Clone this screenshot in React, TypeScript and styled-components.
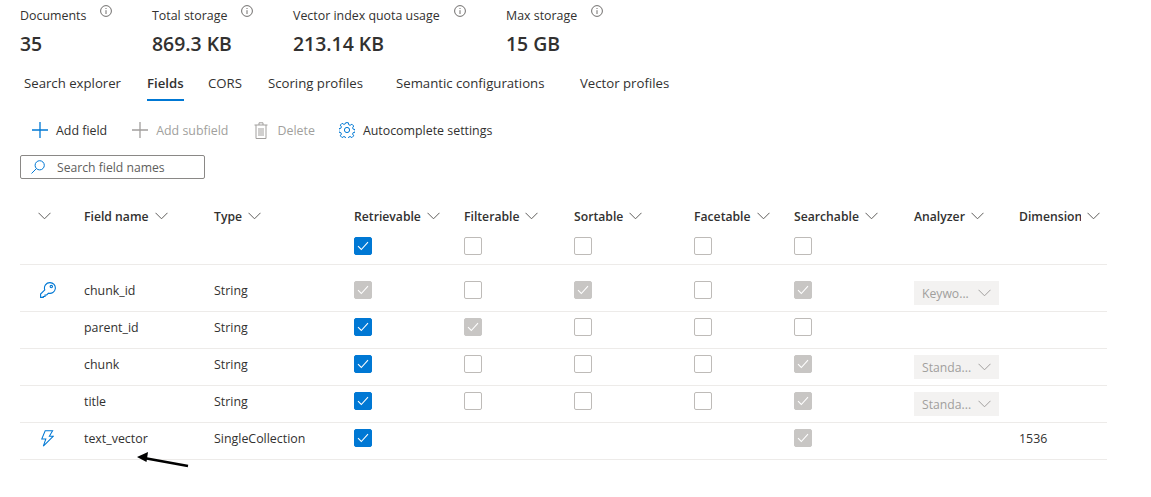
import styled, { createGlobalStyle } from 'styled-components';

const GlobalStyle = createGlobalStyle`
	html, body {
		margin: 0;
		padding: 0;
		background: #fff;
	}
	body {
		font-family: 'Open Sans', 'Liberation Sans', sans-serif;
		font-size: 13px;
		color: #323130;
	}
`;

const Page = styled.div`
	position: relative;
	width: 1151px;
	height: 497px;
	overflow: hidden;
`;

const Stats = styled.div`
	display: grid;
	grid-template-columns: 132px 141px 213px 120px;
	padding: 5px 0 0 20px;
`;

const Stat = styled.div`
	display: flex;
	flex-direction: column;
`;

const StatLabel = styled.div`
	height: 19px;
	line-height: 19px;
	font-size: 12.4px;
	white-space: nowrap;
`;

const InfoIcon = styled.svg`
	width: 12px;
	height: 12px;
	margin-left: 14px;
	vertical-align: 3px;
`;

const StatValue = styled.div`
	margin-top: 6px;
	height: 27px;
	line-height: 27px;
	font-size: 19.4px;
	font-weight: 600;
`;

const Tabs = styled.div`
	display: grid;
	grid-template-columns: 123px 61px 60px 128px 184px auto;
	margin-top: 14px;
	padding-left: 24px;
`;

const Tab = styled.div<{ $active?: boolean }>`
	height: 28px;
	line-height: 24px;
	justify-self: start;
	white-space: nowrap;
	font-size: 13.2px;
	font-weight: ${(p) => (p.$active ? 600 : 400)};
	border-bottom: 2px solid ${(p) => (p.$active ? '#0078d4' : 'transparent')};
`;

const Toolbar = styled.div`
	display: flex;
	align-items: center;
	height: 24px;
	margin-top: 17px;
	padding-left: 32px;
`;

const Command = styled.div<{ $disabled?: boolean; $gap: number; $after: number }>`
	display: flex;
	align-items: center;
	gap: ${(p) => p.$gap}px;
	margin-right: ${(p) => p.$after}px;
	font-size: 12.4px;
	white-space: nowrap;
	color: ${(p) => (p.$disabled ? '#a19f9d' : '#323130')};
`;

const SearchBox = styled.div`
	display: flex;
	align-items: center;
	gap: 12px;
	box-sizing: border-box;
	width: 185px;
	height: 24px;
	margin: 13px 0 0 20px;
	padding-left: 10px;
	border: 1px solid #8a8886;
	border-radius: 2px;
	font-size: 12.2px;
	color: #605e5c;
`;

const Table = styled.div`
	width: 1087px;
	margin: 25px 0 0 20px;
`;

const columns = '64px 130px 140px 110px 110px 120px 100px 120px 105px 88px';

const HeaderRow = styled.div`
	display: grid;
	grid-template-columns: ${columns};
	align-items: center;
	height: 24px;
`;

const HeaderCell = styled.div`
	display: flex;
	align-items: center;
	gap: 6px;
	font-size: 12.2px;
	font-weight: 600;
	white-space: nowrap;
`;

const ClippedLabel = styled.span`
	display: block;
	width: 62px;
	overflow: hidden;
`;

const Row = styled.div<{ $top: number; $height: number }>`
	display: grid;
	grid-template-columns: ${columns};
	align-items: start;
	box-sizing: border-box;
	height: ${(p) => p.$height}px;
	padding-top: ${(p) => p.$top}px;
	border-bottom: 1px solid #edebe9;
`;

const Cell = styled.div`
	display: flex;
	align-items: center;
	height: 18px;
	font-size: 12.4px;
	white-space: nowrap;
`;

const IconCell = styled(Cell)<{ $left: number }>`
	padding-left: ${(p) => p.$left}px;
`;

const Box = styled.div<{ $state: 'on' | 'off' | 'locked' }>`
	display: flex;
	align-items: center;
	justify-content: center;
	box-sizing: border-box;
	width: 18px;
	height: 18px;
	border-radius: 2px;
	border: 1px solid
		${(p) => (p.$state === 'on' ? '#0078d4' : p.$state === 'locked' ? '#c8c6c4' : '#bebbb8')};
	background: ${(p) => (p.$state === 'on' ? '#0078d4' : p.$state === 'locked' ? '#c8c6c4' : '#fff')};
`;

const Analyzer = styled.div`
	display: flex;
	align-items: center;
	align-self: flex-start;
	justify-content: space-between;
	flex-shrink: 0;
	box-sizing: border-box;
	width: 85px;
	height: 24px;
	padding: 0 8px;
	background: #f3f2f1;
	color: #a19f9d;
	font-size: 12.2px;
`;

const Arrow = styled.svg`
	position: absolute;
	left: 130px;
	top: 449px;
	width: 64px;
	height: 24px;
`;

function Chevron({ color = '#605e5c' }: { color?: string }) {
	return (
		<svg width="13" height="8" viewBox="0 0 13 8" fill="none" stroke={color} strokeWidth="1">
			<path d="M.5.8 6.500 6.800 12.500.8" />
		</svg>
	);
}

function Info() {
	return (
		<InfoIcon viewBox="0 0 12 12" fill="none" stroke="#605e5c" strokeWidth="0.9">
			<circle cx="6" cy="6" r="5.400" />
			<path d="M6 5.200V9M6 3v1" />
		</InfoIcon>
	);
}

function Plus({ color }: { color: string }) {
	return (
		<svg width="16" height="16" viewBox="0 0 16 16" stroke={color} strokeWidth="1.300">
			<path d="M8 0v16M0 8h16" />
		</svg>
	);
}

function Trash() {
	return (
		<svg width="14" height="17" viewBox="0 0 14 17" fill="none" stroke="#a19f9d" strokeWidth="1">
			<path d="M.5 3h13M2 3v13.500h10V3M5 3V.8h4V3M5 6v8M7 6v8M9 6v8" />
		</svg>
	);
}

function Gear() {
	return (
		<svg width="16" height="16" viewBox="0 0 16 16" fill="none" stroke="#0078d4" strokeWidth="1">
			<path d="M6.700.7h2.600l.4 2 1.400.6 1.800-1.100 1.800 1.800-1.100 1.800.6 1.400 2 .4v2.600l-2 .4-.6 1.400 1.100 1.800-1.800 1.800-1.800-1.100-1.400.6-.4 2H6.700l-.4-2-1.400-.6-1.800 1.100-1.800-1.800 1.100-1.800-.6-1.400-2-.4V6.700l2-.4.6-1.400-1.100-1.800 1.800-1.800 1.800 1.100 1.400-.6z" />
			<circle cx="8" cy="8" r="2.600" />
		</svg>
	);
}

function SearchIcon() {
	return (
		<svg width="14" height="14" viewBox="0 0 14 14" fill="none" stroke="#0078d4" strokeWidth="1">
			<circle cx="8.700" cy="5.300" r="4.600" />
			<path d="M5.400 8.600.5 13.500" />
		</svg>
	);
}

function KeyIcon() {
	return (
		<svg width="16" height="16" viewBox="0 0 16 16" fill="none" stroke="#0078d4" strokeWidth="1.100">
			<path d="M10 .6a5.400 5.400 0 1 1-1.500 10.600L6.700 13H5v1.500H3.300v.9H.6v-3.300L4.800 7.900A5.400 5.400 0 0 1 10 .6z" />
			<circle cx="11.300" cy="4.600" r="1.200" />
		</svg>
	);
}

function BoltIcon() {
	return (
		<svg width="13" height="17" viewBox="0 0 14 18" fill="none" stroke="#0078d4" strokeWidth="1.100">
			<path d="M4.500.6h8L9 6.500h4.300L2.500 17.200l2.700-7.700H.8z" />
		</svg>
	);
}

function Check({ state }: { state: 'on' | 'off' | 'locked' }) {
	return (
		<Box $state={state}>
			{state !== 'off' && (
				<svg width="12" height="10" viewBox="0 0 12 10" fill="none" stroke="#fff" strokeWidth="1.100">
					<path d="M1 5.200 4.300 8.500 11 1.200" />
				</svg>
			)}
		</Box>
	);
}

type Flag = 'on' | 'off' | 'locked' | null;

const fields: {
	name: string;
	type: string;
	icon?: 'key' | 'bolt';
	flags: Flag[];
	analyzer?: string;
	dimension?: string;
	top: number;
	height: number;
}[] = [
	{ name: 'chunk_id', type: 'String', icon: 'key', flags: ['locked', 'off', 'locked', 'off', 'locked'], analyzer: 'Keywo...', top: 16, height: 47 },
	{ name: 'parent_id', type: 'String', flags: ['on', 'locked', 'off', 'off', 'off'], top: 6, height: 37 },
	{ name: 'chunk', type: 'String', flags: ['on', 'off', 'off', 'off', 'locked'], analyzer: 'Standa...', top: 6, height: 37 },
	{ name: 'title', type: 'String', flags: ['on', 'off', 'off', 'off', 'locked'], analyzer: 'Standa...', top: 6, height: 37 },
	{ name: 'text_vector', type: 'SingleCollection', icon: 'bolt', flags: ['on', null, null, null, 'locked'], dimension: '1536', top: 6, height: 37 },
];

const headers = ['Field name', 'Type', 'Retrievable', 'Filterable', 'Sortable', 'Facetable', 'Searchable', 'Analyzer'];

function App() {
	return (
		<Page>
			<GlobalStyle />
			<Stats>
				{[
					['Documents', '35'],
					['Total storage', '869.3 KB'],
					['Vector index quota usage', '213.14 KB'],
					['Max storage', '15 GB'],
				].map(([label, value]) => (
					<Stat key={label}>
						<StatLabel>
							{label}
							<Info />
						</StatLabel>
						<StatValue>{value}</StatValue>
					</Stat>
				))}
			</Stats>
			<Tabs>
				<Tab>Search explorer</Tab>
				<Tab $active>Fields</Tab>
				<Tab>CORS</Tab>
				<Tab>Scoring profiles</Tab>
				<Tab>Semantic configurations</Tab>
				<Tab>Vector profiles</Tab>
			</Tabs>
			<Toolbar>
				<Command $gap={8} $after={25}>
					<Plus color="#0078d4" />
					Add field
				</Command>
				<Command $disabled $gap={8} $after={26}>
					<Plus color="#a19f9d" />
					Add subfield
				</Command>
				<Command $disabled $gap={9} $after={24}>
					<Trash />
					Delete
				</Command>
				<Command $gap={8} $after={0}>
					<Gear />
					Autocomplete settings
				</Command>
			</Toolbar>
			<SearchBox>
				<SearchIcon />
				Search field names
			</SearchBox>
			<Table>
				<HeaderRow>
					<IconCell $left={18}>
						<Chevron />
					</IconCell>
					{headers.map((h) => (
						<HeaderCell key={h}>
							{h}
							<Chevron />
						</HeaderCell>
					))}
					<HeaderCell>
						<ClippedLabel>Dimensions</ClippedLabel>
						<Chevron />
					</HeaderCell>
				</HeaderRow>
				<Row $top={9} $height={37}>
					<Cell />
					<Cell />
					<Cell />
					<Cell>
						<Check state="on" />
					</Cell>
					<Cell>
						<Check state="off" />
					</Cell>
					<Cell>
						<Check state="off" />
					</Cell>
					<Cell>
						<Check state="off" />
					</Cell>
					<Cell>
						<Check state="off" />
					</Cell>
				</Row>
				{fields.map((f) => (
					<Row key={f.name} $top={f.top} $height={f.height}>
						<IconCell $left={f.icon === 'bolt' ? 21 : 20}>
							{f.icon === 'key' && <KeyIcon />}
							{f.icon === 'bolt' && <BoltIcon />}
						</IconCell>
						<Cell>{f.name}</Cell>
						<Cell>{f.type}</Cell>
						{f.flags.map((flag, i) => (
							<Cell key={i}>{flag && <Check state={flag} />}</Cell>
						))}
						<Cell>
							{f.analyzer && (
								<Analyzer>
									{f.analyzer}
									<Chevron color="#a19f9d" />
								</Analyzer>
							)}
						</Cell>
						<Cell>{f.dimension}</Cell>
					</Row>
				))}
			</Table>
			<Arrow viewBox="0 0 64 24">
				<path d="M58 17 14 9" stroke="#000" strokeWidth="2.600" />
				<path d="M7 8 18 3 16.500 13z" fill="#000" />
			</Arrow>
		</Page>
	);
}

export default App;
